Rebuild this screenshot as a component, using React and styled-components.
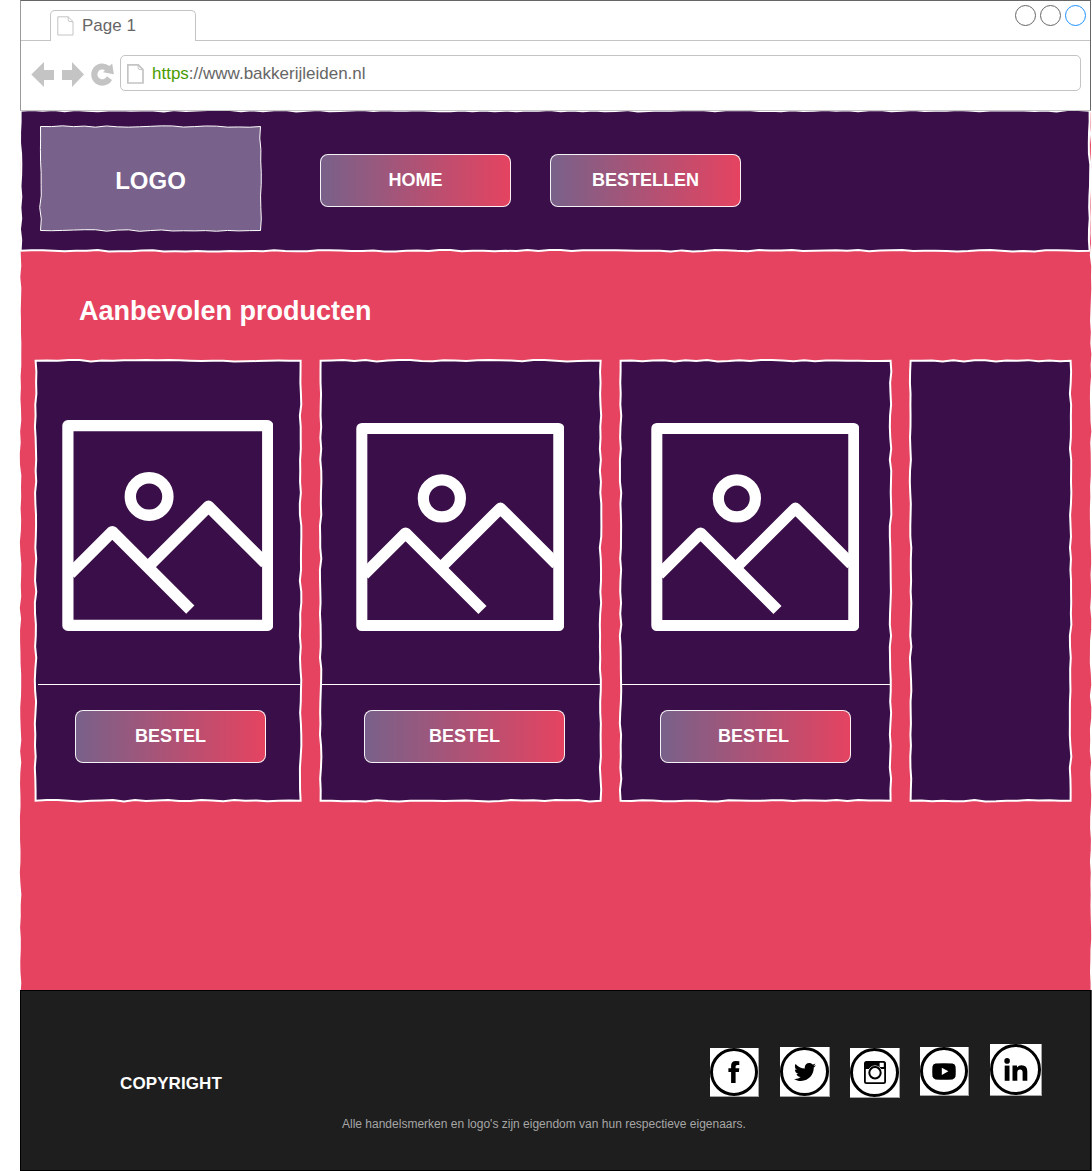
import React from "react";
import styled, { createGlobalStyle } from "styled-components";
import { FaTwitter } from "react-icons/fa";

const color = {
  purple: "#3a0e48",
  mauve: "#78618a",
  pink: "#e54360",
  dark: "#1e1e1e",
  line: "#c4c4c4",
  ink: "#666666",
};

const GlobalStyle = createGlobalStyle`
  *, *::before, *::after { box-sizing: border-box; }
  body {
    margin: 0;
    background: #fff;
    overflow: hidden;
    font-family: "Liberation Sans", Arial, Helvetica, sans-serif;
  }
  h1, p { margin: 0; }
  button { font-family: inherit; }
`;

/* ---------- hand-drawn outlines ---------- */

function roughPath(w, h, inset, seed, amp) {
  let s = seed * 7919 + 17;
  const rnd = () => {
    s = (s * 16807) % 2147483647;
    return (s / 2147483647 - 0.5) * 2 * amp;
  };
  const x0 = inset;
  const y0 = inset;
  const x1 = w - inset;
  const y1 = h - inset;
  const pts = [];
  const side = (ax, ay, bx, by) => {
    const len = Math.hypot(bx - ax, by - ay);
    const n = Math.round(len / 11);
    pts.push([ax, ay]);
    for (let i = 1; i < n; i++) {
      const t = i / n;
      const j = rnd();
      const vertical = ax === bx;
      pts.push([
        ax + (bx - ax) * t + (vertical ? j : 0),
        ay + (by - ay) * t + (vertical ? 0 : j),
      ]);
    }
  };
  side(x0, y0, x1, y0);
  side(x1, y0, x1, y1);
  side(x1, y1, x0, y1);
  side(x0, y1, x0, y0);
  return "M" + pts.map((p) => p[0].toFixed(2) + " " + p[1].toFixed(2)).join("L") + "Z";
}

const Outline = styled.svg`
  position: absolute;
  left: ${(p) => -p.$border}px;
  top: ${(p) => -p.$border}px;
  overflow: visible;
  pointer-events: none;
`;

function RoughOutline({ w, h, fill, seed, border = 2, amp = 0.8 }) {
  const shift = border > 1 ? "translate(-0.4 -0.3)" : undefined;
  return (
    <Outline $border={border} width={w} height={h} aria-hidden="true">
      <path
        d={roughPath(w, h, border / 2, seed, amp)}
        transform={shift}
        fill={fill}
        stroke="#fff"
        strokeWidth={border}
      />
    </Outline>
  );
}

const RoughBox = styled.div`
  position: relative;
  flex: none;
  width: ${(p) => p.$w}px;
  height: ${(p) => p.$h}px;
  border: ${(p) => p.$border ?? 2}px solid transparent;
  background: ${(p) => p.$fill};
  background-clip: padding-box;
`;

const Layer = styled.div`
  position: relative;
  height: 100%;
`;

/* ---------- browser chrome ---------- */

const Screen = styled.div`
  width: 1092px;
  height: 1171px;
  overflow: hidden;
`;

const Chrome = styled.div`
  position: relative;
  z-index: 1;
  margin-left: 20px;
  width: 1071px;
  height: 111px;
  border: 1px solid ${color.ink};
  border-left-color: #999;
  border-bottom-color: ${color.line};
  background: #fff;
`;

const TabBar = styled.div`
  display: flex;
  justify-content: space-between;
  height: 40px;
  padding: 9px 4px 0 29px;
  border-bottom: 1px solid ${color.line};
`;

const Tab = styled.div`
  display: flex;
  align-items: center;
  gap: 8px;
  width: 146px;
  height: 31px;
  padding: 0 0 1px 6px;
  border: 1px solid ${color.line};
  border-bottom: 0;
  border-radius: 5px 5px 0 0;
  background: #fff;
  color: ${color.ink};
  font-size: 17px;
`;

const WindowControls = styled.div`
  display: flex;
  gap: 4px;
  margin-top: -5px;
`;

const Control = styled.span`
  width: 21px;
  height: 21px;
  border: 1px solid ${(p) => (p.$active ? "#1e90ff" : color.ink)};
  border-radius: 50%;
`;

const Toolbar = styled.div`
  display: flex;
  align-items: flex-start;
  height: 69px;
  padding: 14px 9px 0 10px;
`;

const NavIcons = styled.svg`
  flex: none;
  margin-right: 5px;
`;

const Address = styled.div`
  display: flex;
  flex: 1;
  align-items: center;
  gap: 8px;
  height: 36px;
  padding: 2px 5px 0 6px;
  border: 1px solid ${color.line};
  border-radius: 5px;
  color: ${color.ink};
  font-size: 17px;
`;

const Protocol = styled.span`
  color: #4a9c00;
`;

function PageIcon({ weight }) {
  return (
    <svg width="17" height="20" viewBox="0 0 17 20" fill="none" stroke={color.line} strokeWidth={weight}>
      <path d="M.8 .8H11.2L16 5.6V19H.8Z" />
      <path d="M11.2 .8V3.6Q11.2 5.6 13 5.6H16" strokeWidth="1" />
    </svg>
  );
}

/* ---------- site ---------- */

const SiteWrap = styled.div`
  margin-left: 19px;
  height: 879px;
`;

const HeaderWrap = styled.header`
  margin: -3px 0 0 -1px;
`;

const HeaderRow = styled.div`
  display: flex;
  align-items: flex-start;
  padding: 14px 0 0 18px;
`;

const LogoText = styled(Layer)`
  display: flex;
  align-items: center;
  justify-content: center;
  padding-top: 5px;
  color: #fff;
  font-size: 24px;
  font-weight: 700;
`;

const Nav = styled.nav`
  display: flex;
  gap: 39px;
  padding: 28px 0 0 59px;
`;

const PillButton = styled.button`
  flex: none;
  width: ${(p) => p.$w ?? 191}px;
  height: 53px;
  padding: 0 ${(p) => p.$nudge ?? 0}px 0 0;
  border: 1px solid rgba(255, 255, 255, 0.92);
  border-radius: 8px;
  background: linear-gradient(90deg, ${color.mauve}, ${color.pink}) border-box;
  color: #fff;
  font-size: 18px;
  font-weight: 700;
`;

const Title = styled.h1`
  margin: 44px 0 0 58px;
  height: 30px;
  color: #fff;
  font-size: 27px;
  line-height: 30px;
`;

const Cards = styled.div`
  display: flex;
  gap: 18px;
  margin: 34px 0 0 14px;
`;

const Photo = styled.div`
  display: flex;
  align-items: flex-end;
  height: 322px;
  padding: 0 0 53px ${(p) => p.$left}px;
`;

const Divider = styled.div`
  height: 1px;
  margin-left: ${(p) => p.$left ?? 0}px;
  background: #fff;
`;

const Action = styled.div`
  padding: 25px 0 0 ${(p) => p.$left}px;
`;

function Picture({ size }) {
  return (
    <svg width={size} height={size} viewBox="-0.3 0 211 211" fill="none" stroke="#fff">
      <rect x="5.6" y="5.6" width="199.8" height="199.8" strokeWidth="11.2" strokeLinejoin="round" />
      <circle cx="86.8" cy="76.5" r="18.8" strokeWidth="11.4" />
      <g strokeWidth="11.6" strokeLinejoin="round">
        <path d="M8 153.7 50 111.7 128 189.7" />
        <path d="M85.4 147.1 146.2 86.4 203 143.2" />
      </g>
    </svg>
  );
}

const products = [
  { id: 1, width: 267, photo: 25.3, size: 211, rule: 1, action: 38, button: 191 },
  { id: 2, width: 282, photo: 34.3, size: 208, rule: -1, action: 42, button: 201 },
  { id: 3, width: 272, photo: 29.3, size: 208, rule: -1, action: 38, button: 191, nudge: 4 },
  { id: 4, width: 162 },
];

function ProductCard({ item }) {
  return (
    <RoughBox as="article" $w={item.width} $h={442} $fill={color.purple}>
      <RoughOutline w={item.width} h={442} fill={color.purple} seed={item.id + 4} />
      {item.size && (
        <Layer>
          <Photo $left={item.photo}>
            <Picture size={item.size} />
          </Photo>
          <Divider $left={item.rule} />
          <Action $left={item.action}>
            <PillButton $w={item.button} $nudge={item.nudge}>
              BESTEL
            </PillButton>
          </Action>
        </Layer>
      )}
    </RoughBox>
  );
}

/* ---------- footer ---------- */

const Footer = styled.footer`
  position: relative;
  margin-left: 20px;
  width: 1071px;
  height: 181px;
  border: 1px solid #000;
  background: ${color.dark};
  box-shadow: 1px 0 0 #4a4a4a;
`;

const FooterRow = styled.div`
  display: flex;
  justify-content: space-between;
  height: 125px;
  padding: 53px 48px 0 99px;
`;

const Copyright = styled.p`
  margin-top: 30px;
  color: #fff;
  font-size: 17px;
  font-weight: 700;
  line-height: 20px;
  letter-spacing: 0.1px;
`;

const Social = styled.div`
  display: grid;
  grid-template-columns: repeat(4, 70px) 52px;
  align-items: start;
`;

const Badge = styled.a`
  display: block;
  width: ${(p) => p.$size}px;
  height: ${(p) => p.$size}px;
  margin-top: ${(p) => p.$drop}px;
  background: #fff;
  box-shadow: inset -1px -1px 0 #a5a5a5;
`;

const Ring = styled.span`
  display: flex;
  align-items: center;
  justify-content: center;
  width: calc(100% - 1px);
  height: calc(100% - 1px);
  border: 3px solid #000;
  border-radius: 50%;
  color: #000;
`;

const Notice = styled.p`
  padding-left: 321px;
  color: #a6a6a6;
  font-size: 12px;
  line-height: 16px;
`;

function FacebookGlyph() {
  return (
    <svg width="12" height="22" viewBox="0 0 12 22">
      <path d="M11.3.2V3.9H9.2Q7.6 3.9 7.6 5.4V7.2H11.3L10.9 11H7.6V22H3.1V11H.4V7.2H3.1V4.8Q3.1.2 7.7.1Z" />
    </svg>
  );
}

function InstagramGlyph() {
  return (
    <svg width="22" height="23" viewBox="0 0 22 23">
      <rect x=".9" y=".9" width="20.2" height="21.2" rx="1.6" fill="#fff" stroke="#000" strokeWidth="1.8" />
      <path d="M1 1H21V8H1Z" fill="#000" />
      <rect x="15.6" y="1.8" width="4.2" height="4.2" rx=".6" fill="#fff" />
      <circle cx="11" cy="11.8" r="6.9" fill="none" stroke="#fff" strokeWidth="1" />
      <circle cx="11" cy="11.8" r="5.7" fill="#fff" stroke="#000" strokeWidth="2" />
    </svg>
  );
}

function YoutubeGlyph() {
  return (
    <svg width="24" height="17" viewBox="0 0 24 17">
      <path
        d="M3.5.5Q12-.2 20.5.5Q23.2.8 23.5 3.6Q24 8.5 23.5 13.3Q23.2 16 20.5 16.4Q12 17.1 3.5 16.4Q.8 16 .5 13.3Q0 8.5.5 3.6Q.8.8 3.5.5Z"
        fill="#000"
      />
      <path d="M9.8 4.7 16.4 8.3 9.8 12Z" fill="#fff" />
    </svg>
  );
}

function LinkedinGlyph() {
  return (
    <svg width="24" height="23" viewBox="0 0 24 23">
      <circle cx="3.1" cy="2.9" r="2.8" />
      <path d="M.7 7.6H5.5V22.8H.7Z" />
      <path d="M8.5 7.6H13V9.6Q14.5 7.2 17.6 7.2Q23.3 7.2 23.3 13.6V22.8H18.6V14.6Q18.6 11.4 16.1 11.4Q13.3 11.4 13.3 14.8V22.8H8.5Z" />
    </svg>
  );
}

const channels = [
  { name: "Facebook", size: 49, drop: 4, icon: <FacebookGlyph /> },
  { name: "Twitter", size: 50, drop: 3, icon: <FaTwitter size={22} /> },
  { name: "Instagram", size: 50, drop: 4, icon: <InstagramGlyph /> },
  { name: "YouTube", size: 49, drop: 3, icon: <YoutubeGlyph /> },
  { name: "LinkedIn", size: 52, drop: 0, icon: <LinkedinGlyph /> },
];

export default function App() {
  return (
    <Screen>
      <GlobalStyle />
      <Chrome>
        <TabBar>
          <Tab>
            <PageIcon weight={1} />
            Page 1
          </Tab>
          <WindowControls>
            <Control />
            <Control />
            <Control $active />
          </WindowControls>
        </TabBar>
        <Toolbar>
          <NavIcons width="84" height="40" viewBox="31 55 84 40" fill={color.line}>
            <path d="M31.3 74.5 44 62V70H54V80H44V87Z" />
            <path d="M84 74.5 72 62V70H62V80H72V87Z" />
            <path d="M112 80A11.1 11.1 0 1 1 109.4 66L112.2 63.6 113.9 74.2 103 72.3 105 70.3A4.9 4.9 0 1 0 106.8 76.3Z" />
          </NavIcons>
          <Address>
            <PageIcon weight={1.7} />
            <span>
              <Protocol>https</Protocol>://www.bakkerijleiden.nl
            </span>
          </Address>
        </Toolbar>
      </Chrome>

      <SiteWrap>
        <RoughBox $w={1074} $h={884} $fill={color.pink}>
          <RoughOutline w={1074} h={884} fill={color.pink} seed={3} />
          <Layer>
            <HeaderWrap>
              <RoughBox $w={1071} $h={142} $fill={color.purple}>
                <RoughOutline w={1071} h={142} fill={color.purple} seed={2} />
                <Layer>
                  <HeaderRow>
                    <RoughBox $w={221} $h={105} $border={1} $fill={color.mauve}>
                      <RoughOutline w={221} h={105} fill={color.mauve} seed={9} border={1} />
                      <LogoText>LOGO</LogoText>
                    </RoughBox>
                    <Nav>
                      <PillButton>HOME</PillButton>
                      <PillButton>BESTELLEN</PillButton>
                    </Nav>
                  </HeaderRow>
                </Layer>
              </RoughBox>
            </HeaderWrap>
            <Title>Aanbevolen producten</Title>
            <Cards>
              {products.map((item) => (
                <ProductCard key={item.id} item={item} />
              ))}
            </Cards>
          </Layer>
        </RoughBox>
      </SiteWrap>

      <Footer>
        <FooterRow>
          <Copyright>COPYRIGHT</Copyright>
          <Social>
            {channels.map((c) => (
              <Badge key={c.name} $size={c.size} $drop={c.drop} aria-label={c.name}>
                <Ring>{c.icon}</Ring>
              </Badge>
            ))}
          </Social>
        </FooterRow>
        <Notice>Alle handelsmerken en logo's zijn eigendom van hun respectieve eigenaars.</Notice>
      </Footer>
    </Screen>
  );
}
